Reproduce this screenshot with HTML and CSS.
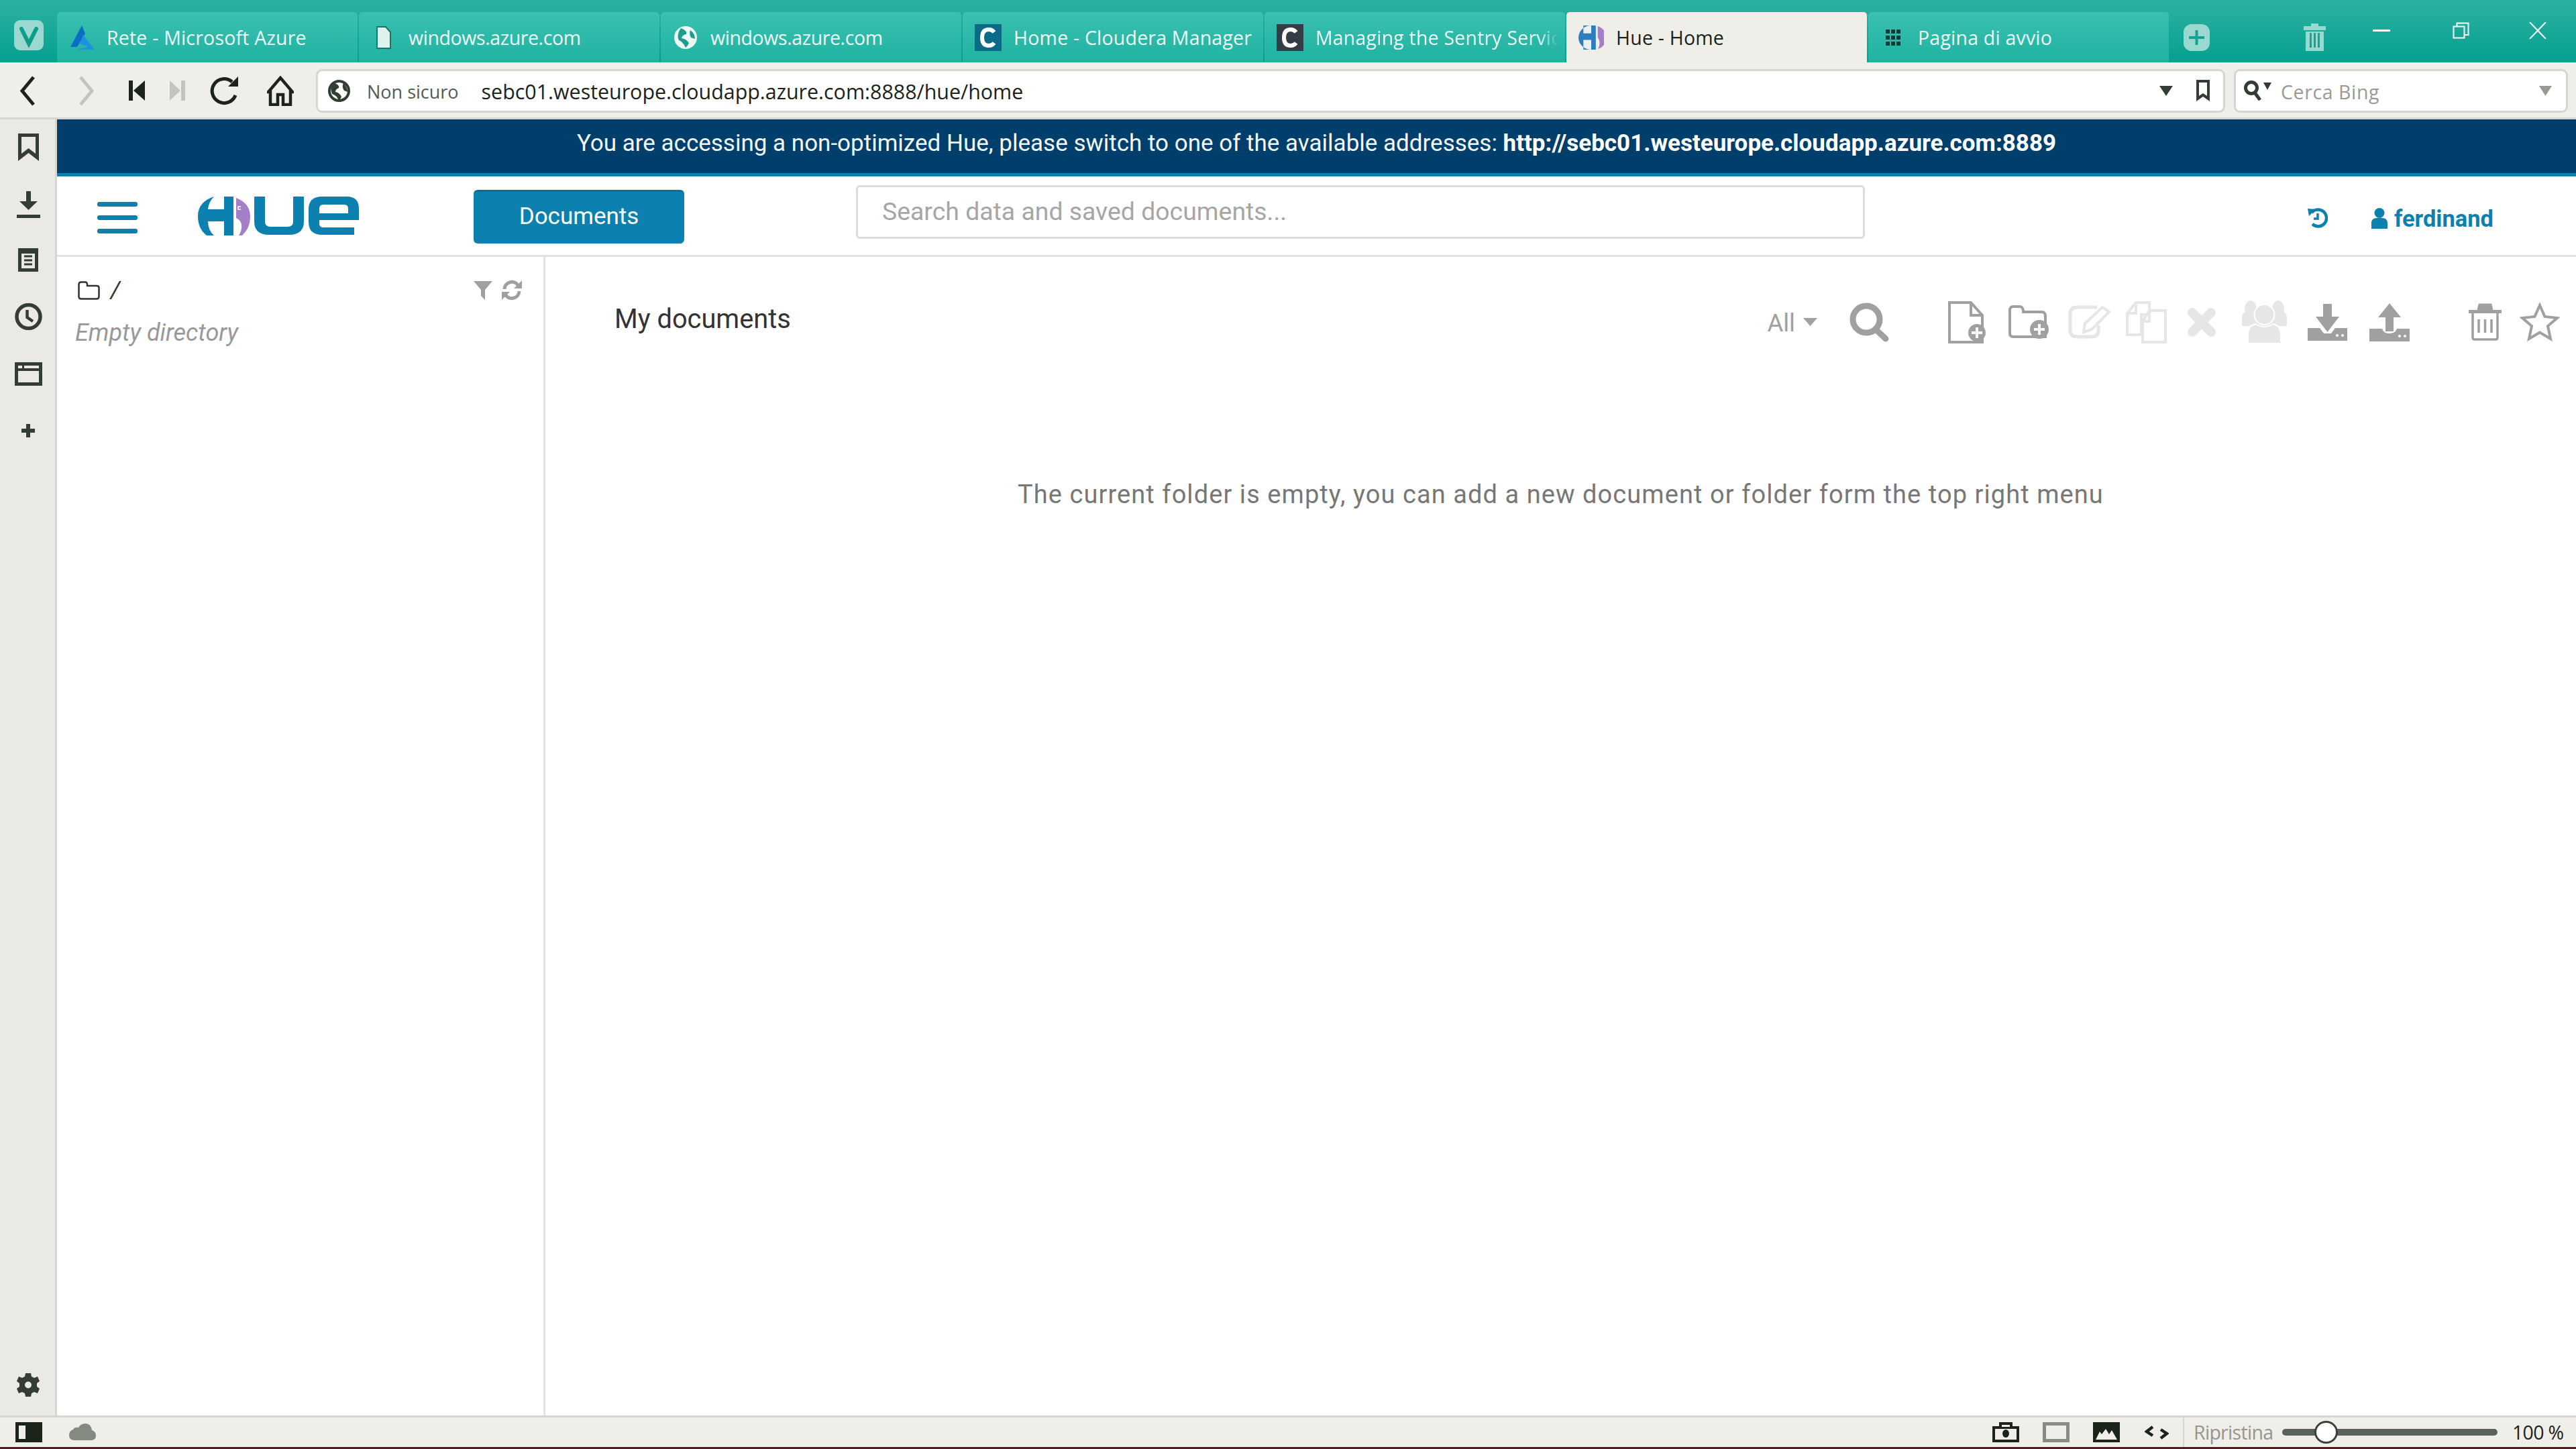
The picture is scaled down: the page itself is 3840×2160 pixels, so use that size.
FILE: index.html
```html
<!DOCTYPE html>
<html>
  <head>
    <title>Hue - Home</title>
    <link rel="stylesheet" href="styles.css">
  </head>
  <body>
    <div class="app">
      <!-- tabs -->
      <div class="tabbar">
        <div class="vivaldi">
          <svg width="44" height="45" viewBox="0 0 44 45"><rect width="44" height="45" rx="9" fill="#9bd8d0"/><path d="M11 13 L22 35 L33 13" fill="none" stroke="#0c9c8c" stroke-width="6" stroke-linecap="round"/></svg>
        </div>
        <div class="tabs">
          <div class="tab">
            <svg class="fav" width="38" height="36" viewBox="0 0 38 36"><path d="M19 0 L2 32 H12 L24 12 Z" fill="#0a6fc4"/><path d="M21 14 L38 36 H10 L28 32 L16 27 Z" fill="#1e90e0"/></svg>
            <span class="tab-text">Rete - Microsoft Azure</span>
          </div>
          <div class="tab">
            <svg class="fav" width="38" height="34" viewBox="0 0 38 34"><path d="M9 1 H22 L29 9 V33 H9 Z" fill="#dff3ee" stroke="#16766c" stroke-width="2"/></svg>
            <span class="tab-text tab-tight">windows.azure.com</span>
          </div>
          <div class="tab">
            <svg class="fav" width="38" height="36" viewBox="0 0 38 36"><circle cx="19" cy="18" r="17" fill="#eef8f5"/><path d="M12 4 Q22 8 20 13 Q14 14 13 19 Q20 20 24 26 Q22 31 19 33 Q16 25 9 22 Q5 14 12 4 Z M26 7 Q33 12 33 20 L27 18 Q24 12 26 7 Z" fill="#1c9d8e"/></svg>
            <span class="tab-text tab-tight">windows.azure.com</span>
          </div>
          <div class="tab">
            <svg class="fav" width="40" height="40" viewBox="0 0 40 40"><rect width="40" height="40" fill="#0a6a87"/><path d="M29 12 Q26 8 21 8 Q11 8 11 20 Q11 32 21 32 Q26 32 29 28" fill="none" stroke="#fff" stroke-width="6"/></svg>
            <span class="tab-text">Home - Cloudera Manager</span>
          </div>
          <div class="tab">
            <svg class="fav" width="40" height="40" viewBox="0 0 40 40"><rect width="40" height="40" fill="#333c47"/><path d="M29 12 Q26 8 21 8 Q11 8 11 20 Q11 32 21 32 Q26 32 29 28" fill="none" stroke="#fff" stroke-width="6"/></svg>
            <span class="tab-text tab-fade">Managing the Sentry Service</span>
          </div>
          <div class="tab tab-active">
            <svg class="fav" width="38" height="36" viewBox="0 0 78 74"><path d="M39 0 A39 37 0 0 0 39 74 H53 V0 Z M15 0 H39 V24 H15 Z M15 44 H39 V74 H15 Z" fill="#2a7fbc" fill-rule="evenodd"/><path d="M59 2 A39 37 0 0 1 60 72 Q70 52 59 36 Z" fill="#a57fc6"/></svg>
            <span class="tab-text">Hue - Home</span>
          </div>
          <div class="tab">
            <svg class="fav" width="38" height="26" viewBox="0 0 38 26"><path d="M8 1 h6 v6 h-6 z M16 1 h6 v6 h-6 z M24 1 h6 v6 h-6 z M8 10 h6 v6 h-6 z M16 10 h6 v6 h-6 z M24 10 h6 v6 h-6 z M8 19 h6 v6 h-6 z M16 19 h6 v6 h-6 z M24 19 h6 v6 h-6 z" fill="#0e3d37"/></svg>
            <span class="tab-text">Pagina di avvio</span>
          </div>
        </div>
        <svg class="new-tab" width="39" height="40" viewBox="0 0 39 40"><rect width="39" height="40" rx="12" fill="#9bd8d0"/><path d="M19.5 9 V31 M8 20 H31" stroke="#14a292" stroke-width="4"/></svg>
        <svg class="closed-tabs" width="33" height="41" viewBox="0 0 33 41"><path d="M11 0 H22 V4 H33 V10 H0 V4 H11 Z" fill="#9bd8d0"/><path d="M3 12 H30 V41 H3 Z M9 14 V36 H12 V14 Z M15 14 V36 H18 V14 Z M21 14 V36 H24 V14 Z" fill="#9bd8d0" fill-rule="evenodd"/></svg>
        <div class="win-controls">
          <svg class="win-min" width="26" height="3" viewBox="0 0 26 3"><rect width="26" height="3" fill="#fff"/></svg>
          <svg class="win-max" width="25" height="25" viewBox="0 0 25 25"><path d="M1.5 6.5 H17.5 V23.5 H1.5 Z M6.5 6 V1.5 H23.5 V19 H18" fill="none" stroke="#fff" stroke-width="2"/></svg>
          <svg class="win-close" width="26" height="25" viewBox="0 0 26 25"><path d="M1 0 L25 25 M25 0 L1 25" stroke="#fff" stroke-width="2"/></svg>
        </div>
      </div>

      <!-- address bar -->
      <div class="toolbar">
        <svg class="nav-back" width="26" height="45" viewBox="0 0 26 45"><path d="M22 2 L5 22.5 L22 43" fill="none" stroke="#1b231b" stroke-width="5"/></svg>
        <svg class="nav-fwd" width="25" height="45" viewBox="0 0 25 45"><path d="M4 2 L21 22.5 L4 43" fill="none" stroke="#c4c4bd" stroke-width="5"/></svg>
        <svg class="nav-rew" width="24" height="30" viewBox="0 0 24 30"><path d="M0 0 H6 V30 H0 Z M24 0 V30 L7 15 Z" fill="#1b231b"/></svg>
        <svg class="nav-ff" width="23" height="30" viewBox="0 0 23 30"><path d="M23 0 H17 V30 H23 Z M0 0 V30 L16 15 Z" fill="#c4c4bd"/></svg>
        <svg class="nav-reload" width="44" height="43" viewBox="0 0 44 43"><path d="M33 8 A18 18 0 1 0 38 28" fill="none" stroke="#1b231b" stroke-width="5"/><path d="M27 15 L42 0 V15 Z" fill="#1b231b"/></svg>
        <svg class="nav-home" width="40" height="45" viewBox="0 0 40 45"><path d="M20 3 L38 24 H35 V43 H24 V28 H16 V43 H5 V24 H2 Z" fill="none" stroke="#1b231b" stroke-width="4.5"/></svg>
        <div class="address">
          <svg class="addr-globe" width="33" height="35" viewBox="0 0 33 35"><circle cx="16.5" cy="17.5" r="14.5" fill="#fff" stroke="#333d33" stroke-width="4"/><path d="M8 5 Q18 9 16 13 Q11 15 11 19 Q17 20 20 26 Q19 30 16 32 Q13 24 6 22 Q2 13 8 5 Z M23 6 Q29 12 29 19 L24 17 Q20 11 23 6 Z" fill="#333d33"/></svg>
          <span class="addr-note">Non sicuro</span>
          <span class="addr-url">sebc01.westeurope.cloudapp.azure.com:8888/hue/home</span>
          <svg class="addr-drop" width="20" height="15" viewBox="0 0 20 15"><path d="M0 0 H20 L10 15 Z" fill="#333d33"/></svg>
          <svg class="addr-mark" width="20" height="32" viewBox="0 0 20 32"><path d="M0 0 H20 V32 L10 25 L0 32 Z M4 4 V24 L10 20 L16 24 V4 Z" fill="#333d33" fill-rule="evenodd"/></svg>
        </div>
        <div class="websearch">
          <svg class="ws-icon" width="42" height="30" viewBox="0 0 42 30"><circle cx="12" cy="11" r="8.5" fill="none" stroke="#333d33" stroke-width="5"/><path d="M17 18 L25 29" stroke="#333d33" stroke-width="5"/><path d="M30 3 H42 L36 14 Z" fill="#333d33"/></svg>
          <span class="ws-text">Cerca Bing</span>
          <svg class="ws-drop" width="19" height="15" viewBox="0 0 19 15"><path d="M0 0 H19 L9.5 15 Z" fill="#9a9a94"/></svg>
        </div>
      </div>

      <div class="body">
        <!-- vivaldi side panel -->
        <div class="sidebar">
          <svg class="s-bookmark" width="31" height="41" viewBox="0 0 31 41"><path d="M0 0 H31 V41 L15.5 29 L0 41 Z M5 5 V30 L15.5 22 L26 30 V5 Z" fill="#333d33" fill-rule="evenodd"/></svg>
          <svg class="s-download" width="35" height="40" viewBox="0 0 35 40"><path d="M14 0 H21 V15 H31 L17.5 28 L4 15 H14 Z M0 35 H35 V40 H0 Z" fill="#333d33"/></svg>
          <svg class="s-notes" width="30" height="35" viewBox="0 0 30 35"><path d="M0 0 H30 V35 H0 Z M5 8 V30 H25 V8 Z" fill="#333d33" fill-rule="evenodd"/><path d="M9 12 H21 M9 18 H21 M9 24 H21" stroke="#333d33" stroke-width="3"/></svg>
          <svg class="s-clock" width="41" height="40" viewBox="0 0 41 40"><circle cx="20.5" cy="20" r="17.5" fill="none" stroke="#333d33" stroke-width="5.5"/><path d="M18.5 10 V21 L27 27" fill="none" stroke="#333d33" stroke-width="4.5"/></svg>
          <svg class="s-window" width="41" height="35" viewBox="0 0 41 35"><path d="M0 0 H41 V35 H0 Z M5 13 V30 H36 V13 Z M5 5 V9 H11 V5 Z M14 5 V9 H36 V5 Z" fill="#333d33" fill-rule="evenodd"/></svg>
          <svg class="s-plus" width="20" height="20" viewBox="0 0 20 20"><path d="M7 0 H13 V7 H20 V13 H13 V20 H7 V13 H0 V7 H7 Z" fill="#333d33"/></svg>
          <svg class="s-gear" width="34" height="35" viewBox="0 0 34 35"><path d="M13 0 H21 L22 5 L26 7 L31 5 L34 12 L30 15 V20 L34 23 L31 30 L26 28 L22 30 L21 35 H13 L12 30 L8 28 L3 30 L0 23 L4 20 V15 L0 12 L3 5 L8 7 L12 5 Z M17 12.5 A5 5 0 1 0 17 22.5 A5 5 0 1 0 17 12.5 Z" fill="#333d33" fill-rule="evenodd"/></svg>
        </div>

        <div class="page">
          <div class="banner">
            <span>You are accessing a non-optimized Hue, please switch to one of the available addresses: <b>http://sebc01.westeurope.cloudapp.azure.com:8889</b></span>
          </div>

          <header class="hue-nav">
            <div class="hamburger"><i></i><i></i><i></i></div>
            <svg class="hue-logo" width="240" height="58" viewBox="0 0 240 58">
              <path d="M24 0 Q0 8 0 29 Q0 48 13 58 H24 Q15 50 15 37 H39 V58 H53 V0 H39 V19 H15 Q16 8 24 0 Z" fill="#0c80ae"/>
              <path d="M57 2 Q78 10 78 30 Q78 47 66 58 H61 Q66 50 65 42 Q64 35 57 32 Z" fill="#a57fc6"/>
              <path d="M64 15 H60 V19 H64" fill="none" stroke="#fff" stroke-width="1.5"/>
              <path d="M84 0 H100 V37 Q100 45 108 45 H134 Q142 45 142 37 V0 H158 V37 Q158 57 136 57 H106 Q84 57 84 37 Z" fill="#0c80ae"/>
              <path d="M185 0 H222 Q240 0 240 18 V35 H181 V40 Q181 46 187 46 H233 V57 H185 Q165 57 165 38 V19 Q165 0 185 0 Z M187 12 Q181 12 181 18 V25 H224 V18 Q224 12 218 12 Z" fill="#0c80ae" fill-rule="evenodd"/>
            </svg>
            <button class="btn-docs">Documents</button>
            <div class="hue-search">Search data and saved documents...</div>
            <svg class="hue-history" width="30" height="31" viewBox="0 0 30 31"><path d="M6 8 A12.5 12.5 0 1 1 7 25" fill="none" stroke="#0c80ae" stroke-width="4.5"/><path d="M0 2 L12 3 L2 13 Z" fill="#0c80ae"/><path d="M15 9 V17 H9" fill="none" stroke="#0c80ae" stroke-width="3.5"/></svg>
            <div class="hue-user">
              <svg width="24" height="31" viewBox="0 0 24 31"><ellipse cx="12" cy="7.5" rx="7.5" ry="7.5" fill="#0c80ae"/><path d="M0 31 V23 Q0 15 8 15 H16 Q24 15 24 23 V31 Z" fill="#0c80ae"/></svg>
              <span>ferdinand</span>
            </div>
          </header>

          <div class="hue-main">
            <aside class="assist">
              <div class="assist-head">
                <svg class="assist-folder" width="33" height="28" viewBox="0 0 33 28"><path d="M1.5 5 Q1.5 1.5 5 1.5 H11 Q14 1.5 14 5 V7 H28 Q31.5 7 31.5 10 V23 Q31.5 26.5 28 26.5 H5 Q1.5 26.5 1.5 23 Z" fill="none" stroke="#333" stroke-width="2.5"/></svg>
                <span class="assist-path">/</span>
                <svg class="assist-filter" width="28" height="28" viewBox="0 0 28 28"><path d="M0 0 H28 L17 13 V28 L11 22 V13 Z" fill="#a0a0a0"/></svg>
                <svg class="assist-refresh" width="30" height="31" viewBox="0 0 30 31"><path d="M4 14 A11 11 0 0 1 24 8 M26 17 A11 11 0 0 1 6 23" fill="none" stroke="#a0a0a0" stroke-width="5"/><path d="M30 1 V13 H18 Z M0 30 V18 H12 Z" fill="#a0a0a0"/></svg>
              </div>
              <div class="assist-empty">Empty directory</div>
            </aside>

            <section class="docs">
              <div class="docs-head">
                <h2 class="docs-title">My documents</h2>
                <div class="docs-actions">
                  <span class="act-all">All</span>
                  <svg class="a-caret" width="21" height="12" viewBox="0 0 21 12"><path d="M0 0 H21 L10.5 12 Z" fill="#a0a0a0"/></svg>
                  <svg class="a-search" width="61" height="59" viewBox="0 0 61 59"><circle cx="26" cy="25" r="20" fill="none" stroke="#a0a0a0" stroke-width="9"/><path d="M40 40 L55 54" stroke="#a0a0a0" stroke-width="9" stroke-linecap="round"/></svg>
                  <svg class="a-newdoc" width="57" height="64" viewBox="0 0 57 64"><path d="M3 3 H35 L52 22 V62 H3 Z M35 3 V22 H52" fill="none" stroke="#a0a0a0" stroke-width="4"/><circle cx="44" cy="48" r="13" fill="#a0a0a0"/><path d="M44 40 V56 M36 48 H52" stroke="#fff" stroke-width="4"/></svg>
                  <svg class="a-newfolder" width="62" height="50" viewBox="0 0 62 50"><path d="M3 8 Q3 2 8 2 H18 Q22 2 23 8 V10 H50 Q56 10 56 16 V47 H8 Q3 47 3 42 Z" fill="none" stroke="#a0a0a0" stroke-width="4"/><circle cx="47" cy="36" r="14" fill="#a0a0a0"/><path d="M47 28 V44 M39 36 H55" stroke="#fff" stroke-width="4"/></svg>
                  <svg class="a-edit" width="67" height="50" viewBox="0 0 67 50"><path d="M44 3 H14 Q4 3 4 13 V37 Q4 47 14 47 H36 Q46 47 46 37 V30" fill="none" stroke="#e6e6e6" stroke-width="5"/><path d="M24 40 L26 27 L52 3 L62 10 L36 36 Z" fill="none" stroke="#e6e6e6" stroke-width="4"/></svg>
                  <svg class="a-copy" width="63" height="63" viewBox="0 0 63 63"><path d="M16 2 H36 V20 H24 V50 H3 V18 Z M16 2 V18 H3" fill="none" stroke="#e6e6e6" stroke-width="4"/><path d="M36 14 H60 V61 H26 V30 Z M36 14 V30 H26" fill="none" stroke="#e6e6e6" stroke-width="4"/></svg>
                  <svg class="a-close" width="44" height="43" viewBox="0 0 44 43"><path d="M8 7 L36 36 M36 7 L8 36" stroke="#e6e6e6" stroke-width="14" stroke-linecap="round"/></svg>
                  <svg class="a-group" width="67" height="64" viewBox="0 0 67 64"><ellipse cx="13" cy="13" rx="9" ry="13" fill="#e6e6e6"/><ellipse cx="54" cy="13" rx="9" ry="13" fill="#e6e6e6"/><path d="M0 38 V24 Q1 18 6 17 H61 Q66 18 67 24 V38 Z" fill="#e6e6e6"/><ellipse cx="33.5" cy="21" rx="15" ry="15" fill="#e6e6e6" stroke="#fff" stroke-width="2"/><path d="M9 64 V50 Q9 38 20 35 Q33 43 47 35 Q58 38 58 50 V64 Z" fill="#e6e6e6" stroke="#fff" stroke-width="2"/></svg>
                  <svg class="a-download" width="59" height="55" viewBox="0 0 59 55"><path d="M23 0 H36 V19 H47 L29.5 42 L12 19 H23 Z" fill="#a0a0a0"/><path d="M0 36 H18 L24 44 H35 L41 36 H59 V55 H0 Z" fill="#a0a0a0"/><circle cx="44" cy="47" r="2" fill="#fff"/><circle cx="52" cy="47" r="2" fill="#fff"/></svg>
                  <svg class="a-upload" width="62" height="57" viewBox="0 0 62 57"><path d="M31 0 L48 21 H37 V42 H25 V21 H14 Z" fill="#a0a0a0"/><path d="M1 38 H20 Q22 45 31 45 Q40 45 42 38 H61 V57 H1 Z" fill="#a0a0a0"/><circle cx="46" cy="49" r="2" fill="#fff"/><circle cx="54" cy="49" r="2" fill="#fff"/></svg>
                  <svg class="a-trash" width="49" height="56" viewBox="0 0 49 56"><path d="M0 10 H49 V15 H0 Z M14 10 L16 2 H33 L35 10" fill="#a0a0a0"/><path d="M14 10 L16 2 H33 L35 10" fill="none" stroke="#a0a0a0" stroke-width="3"/><path d="M6 15 V51 Q6 54 9 54 H40 Q43 54 43 51 V15" fill="none" stroke="#a0a0a0" stroke-width="3.5"/><path d="M15 24 V44 M24.5 24 V44 M34 24 V44" stroke="#a0a0a0" stroke-width="3.5"/></svg>
                  <svg class="a-star" width="60" height="58" viewBox="0 0 60 58"><path d="M30 4 L37.5 21 L56 23 L42 35 L46 54 L30 44.5 L14 54 L18 35 L4 23 L22.5 21 Z" fill="none" stroke="#a0a0a0" stroke-width="4"/></svg>
                </div>
              </div>
              <p class="docs-empty">The current folder is empty, you can add a new document or folder form the top right menu</p>
            </section>
          </div>
        </div>
      </div>

      <!-- status bar -->
      <div class="statusbar">
        <svg class="st-panel" width="40" height="30" viewBox="0 0 40 30"><path d="M0 0 H40 V30 H0 Z M5 5 V25 H15 V5 Z" fill="#1a2419" fill-rule="evenodd"/></svg>
        <svg class="st-cloud" width="40" height="26" viewBox="0 0 40 26"><path d="M8 25 Q0 25 0 17 Q0 11 6 9 Q8 5 14 6 Q17 0 25 0 Q33 1 34 10 Q40 12 40 18 Q40 25 33 25 Z" fill="#858a80"/></svg>
        <svg class="st-camera" width="40" height="30" viewBox="0 0 40 30"><path d="M0 6 H10 V0 H30 V6 H40 V30 H0 Z M4 10 V26 H36 V10 Z M14 4 V7 H26 V4 Z" fill="#1a2419" fill-rule="evenodd"/><ellipse cx="20" cy="17" rx="5" ry="6" fill="#1a2419"/></svg>
        <svg class="st-rect" width="40" height="30" viewBox="0 0 40 30"><path d="M0 0 H40 V30 H0 Z M5 5 V25 H35 V5 Z" fill="#878b82" fill-rule="evenodd"/></svg>
        <svg class="st-image" width="40" height="30" viewBox="0 0 40 30"><path d="M0 0 H40 V30 H0 Z M4 26 H36 L28 12 L24 18 L19 10 L13 18 L10 14 Z" fill="#1a2419" fill-rule="evenodd"/></svg>
        <svg class="st-code" width="36" height="21" viewBox="0 0 36 21"><path d="M12 2 L3 9 L12 15 M24 6 L33 12 L24 19" fill="none" stroke="#1a2419" stroke-width="4.5"/></svg>
        <div class="st-zoom">
          <span class="st-reset">Ripristina</span>
          <div class="slider"><div class="slider-thumb"></div></div>
          <span class="st-value">100 %</span>
        </div>
      </div>
      <div class="edge"></div>
    </div>
  </body>
</html>
```

FILE: styles.css
```css
html,
body {
  margin: 0;
  height: 100%;
  overflow: hidden;
}

body {
  font-family: Roboto, Arial, sans-serif;
  background-color: #fff;
}

svg {
  display: block;
  flex: none;
}

.app {
  display: flex;
  flex-direction: column;
  height: 2160px;
}

/* tab bar */
.tabbar {
  display: flex;
  align-items: center;
  height: 75px;
  padding-top: 18px;
  background: linear-gradient(#2cb1a1, #05a08f);
  font-family: "Open Sans", "Noto Sans", sans-serif;
}

.vivaldi {
  width: 85px;
  flex: none;
  padding-left: 21px;
  box-sizing: border-box;
  margin-bottom: 7px;
}

.tabs {
  display: flex;
  gap: 2px;
  align-self: stretch;
}

.tab {
  display: flex;
  align-items: center;
  width: 448px;
  box-sizing: border-box;
  padding-left: 18px;
  border-radius: 5px 5px 0 0;
  background: linear-gradient(#39c0b0, #20b2a1);
  color: #eefaf7;
  font-size: 28.5px;
  letter-spacing: 0.2px;
  white-space: nowrap;
  overflow: hidden;
}

.tab .fav {
  margin-right: 18px;
}

.tab-tight {
  letter-spacing: -0.4px;
}

.tab-active {
  background: #efeee9;
  color: #1b231b;
}

.tab-fade {
  width: 362px;
  overflow: hidden;
  -webkit-mask-image: linear-gradient(to right, #000 92%, transparent);
  mask-image: linear-gradient(to right, #000 92%, transparent);
}

.new-tab {
  margin-left: 22px;
}

.closed-tabs {
  margin-left: 140px;
}

.win-controls {
  display: flex;
  align-items: center;
  padding-bottom: 20px;
}

.win-min {
  margin-left: 70px;
}

.win-max {
  margin-left: 93px;
}

.win-close {
  margin-left: 89px;
}

/* address bar */
.toolbar {
  display: flex;
  align-items: center;
  height: 85px;
  box-sizing: border-box;
  padding-top: 2px;
  border-bottom: 3px solid #d6d5cf;
  background-color: #efeee9;
  font-family: "Open Sans", "Noto Sans", sans-serif;
  font-size: 28.5px;
}

.nav-back {
  margin-left: 28px;
}

.nav-fwd {
  margin-left: 62px;
}

.nav-rew {
  margin-left: 51px;
}

.nav-ff {
  margin-left: 37px;
}

.nav-reload {
  margin-left: 37px;
}

.nav-home {
  margin-left: 41px;
}

.address,
.websearch {
  display: flex;
  align-items: center;
  height: 65px;
  box-sizing: border-box;
  border: 3px solid #d6d5cf;
  border-radius: 9px;
  background-color: #fff;
}

.address {
  width: 2846px;
  margin-left: 33px;
  padding-left: 15px;
}

.addr-note {
  margin-left: 25px;
  margin-top: 3px;
  color: #555b55;
  font-size: 27px;
}

.addr-url {
  margin-left: 34px;
  margin-top: 3px;
  color: #1b231b;
  font-size: 30.4px;
}

.addr-drop {
  margin-left: auto;
}

.addr-mark {
  margin-left: 35px;
  margin-right: 20px;
}

.websearch {
  width: 498px;
  margin-left: 13px;
  padding-left: 11px;
}

.ws-text {
  margin-left: 14px;
  margin-top: 3px;
  color: #9a9a94;
  letter-spacing: 0.6px;
}

.ws-drop {
  margin-left: auto;
  margin-right: 21px;
}

/* main area */
.body {
  display: flex;
  flex: 1;
  min-height: 0;
}

.sidebar {
  display: flex;
  flex-direction: column;
  align-items: center;
  width: 80px;
  flex: none;
  padding-top: 21px;
  padding-left: 2px;
  border-right: 3px solid #d6d5cf;
  background-color: #eae9e5;
}

.s-download {
  margin-top: 45px;
}

.s-notes {
  margin-top: 45px;
}

.s-clock {
  margin-top: 47px;
}

.s-window {
  margin-top: 48px;
}

.s-plus {
  margin-top: 57px;
}

.s-gear {
  margin-top: auto;
  margin-bottom: 28px;
}

.page {
  display: flex;
  flex-direction: column;
  flex: 1;
  min-width: 0;
}

.banner {
  display: flex;
  justify-content: center;
  height: 80px;
  border-bottom: 5px solid #0c80ae;
  background-color: #003f6c;
  color: #f2f7fa;
  font-size: 35px;
  line-height: 72px;
}

.banner b {
  color: #fff;
  font-weight: 700;
}

.hue-nav {
  display: flex;
  align-items: center;
  height: 117px;
  border-bottom: 3px solid #e2e2e2;
}

.hamburger {
  display: flex;
  flex-direction: column;
  gap: 13px;
  width: 60px;
  margin-left: 60px;
  margin-top: 6px;
}

.hamburger i {
  display: block;
  height: 7px;
  border-radius: 3px;
  background-color: #0c80ae;
}

.hue-logo {
  margin-left: 90px;
}

.btn-docs {
  width: 314px;
  height: 80px;
  margin-left: 171px;
  margin-top: 3px;
  padding-bottom: 5px;
  border: none;
  border-top: 3px solid #096f99;
  border-radius: 6px;
  background-color: #0c80ae;
  color: #fff;
  font-family: Roboto, Arial, sans-serif;
  font-size: 35px;
}

.hue-search {
  width: 1504px;
  height: 80px;
  box-sizing: border-box;
  margin-left: 256px;
  margin-bottom: 11px;
  padding-left: 36px;
  border: 3px solid #dcdcdc;
  border-radius: 6px;
  color: #a6a6a6;
  font-size: 37.4px;
  line-height: 72px;
}

.hue-history {
  margin-left: 660px;
  margin-top: 6px;
}

.hue-user {
  display: flex;
  align-items: center;
  gap: 10px;
  margin-left: 65px;
  margin-top: 8px;
  color: #0c80ae;
  font-size: 34.5px;
  font-weight: 700;
}

.hue-main {
  display: flex;
  flex: 1;
  min-height: 0;
}

/* left assist panel */
.assist {
  width: 725px;
  flex: none;
  border-right: 3px solid #e2e2e2;
}

.assist-head {
  display: flex;
  align-items: center;
  padding-top: 29px;
  padding-left: 31px;
}

.assist-path {
  margin-left: 16px;
  color: #333;
  font-size: 35px;
  font-style: italic;
}

.assist-filter {
  margin-left: auto;
}

.assist-refresh {
  margin-left: 14px;
  margin-right: 32px;
}

.assist-empty {
  margin-top: 22px;
  margin-left: 27px;
  color: #999;
  font-size: 36px;
  font-style: italic;
}

/* documents */
.docs {
  flex: 1;
  min-width: 0;
}

.docs-head {
  display: flex;
  align-items: center;
  height: 66px;
  padding-top: 64px;
  padding-left: 103px;
  padding-right: 24px;
}

.docs-title {
  margin: 0 0 10px;
  color: #333;
  font-size: 39.8px;
  font-weight: 400;
}

.docs-actions {
  display: flex;
  align-items: center;
  margin-left: auto;
}

.act-all {
  margin-top: 2px;
  color: #a0a0a0;
  font-size: 36.5px;
}

.a-caret {
  margin-left: 12px;
}

.a-search {
  margin-left: 47px;
}

.a-newdoc {
  margin-left: 86px;
}

.a-newfolder {
  margin-left: 33px;
}

.a-edit {
  margin-left: 27px;
}

.a-copy {
  margin-left: 19px;
}

.a-close {
  margin-left: 29px;
}

.a-group {
  margin-left: 38px;
}

.a-download {
  margin-left: 31px;
}

.a-upload {
  margin-left: 32px;
}

.a-trash {
  margin-left: 87px;
}

.a-star {
  margin-left: 27px;
}

.docs-empty {
  margin: 199px 0 0;
  color: #777;
  font-size: 38px;
  line-height: 50px;
  letter-spacing: 1.07px;
  text-align: center;
}

/* status bar */
.statusbar {
  display: flex;
  align-items: center;
  height: 44px;
  border-top: 3px solid #d6d5cf;
  background-color: #efeee9;
  font-family: "Open Sans", "Noto Sans", sans-serif;
  font-size: 28.5px;
  letter-spacing: -0.7px;
}

.st-panel {
  margin-left: 23px;
}

.st-cloud {
  margin-left: 40px;
}

.st-camera {
  margin-left: auto;
}

.st-rect {
  margin-left: 35px;
}

.st-image {
  margin-left: 35px;
}

.st-code {
  margin-left: 37px;
}

.st-zoom {
  display: flex;
  align-items: center;
  align-self: stretch;
  width: 586px;
  box-sizing: border-box;
  margin-left: 21px;
  padding-left: 14px;
  border-left: 2px solid #d6d5cf;
}

.st-reset {
  width: 115px;
  color: #94968f;
}

.slider {
  position: relative;
  width: 321px;
  height: 10px;
  margin-left: 17px;
  border-radius: 5px;
  background-color: #5a6358;
}

.slider-thumb {
  position: absolute;
  left: 48px;
  top: -12px;
  width: 29px;
  height: 28px;
  border: 3px solid #39423a;
  border-radius: 50%;
  background-color: #fff;
}

.st-value {
  margin-left: 22px;
  color: #1b231b;
}

.edge {
  height: 3px;
  background-color: #4f1f1f;
}
```
